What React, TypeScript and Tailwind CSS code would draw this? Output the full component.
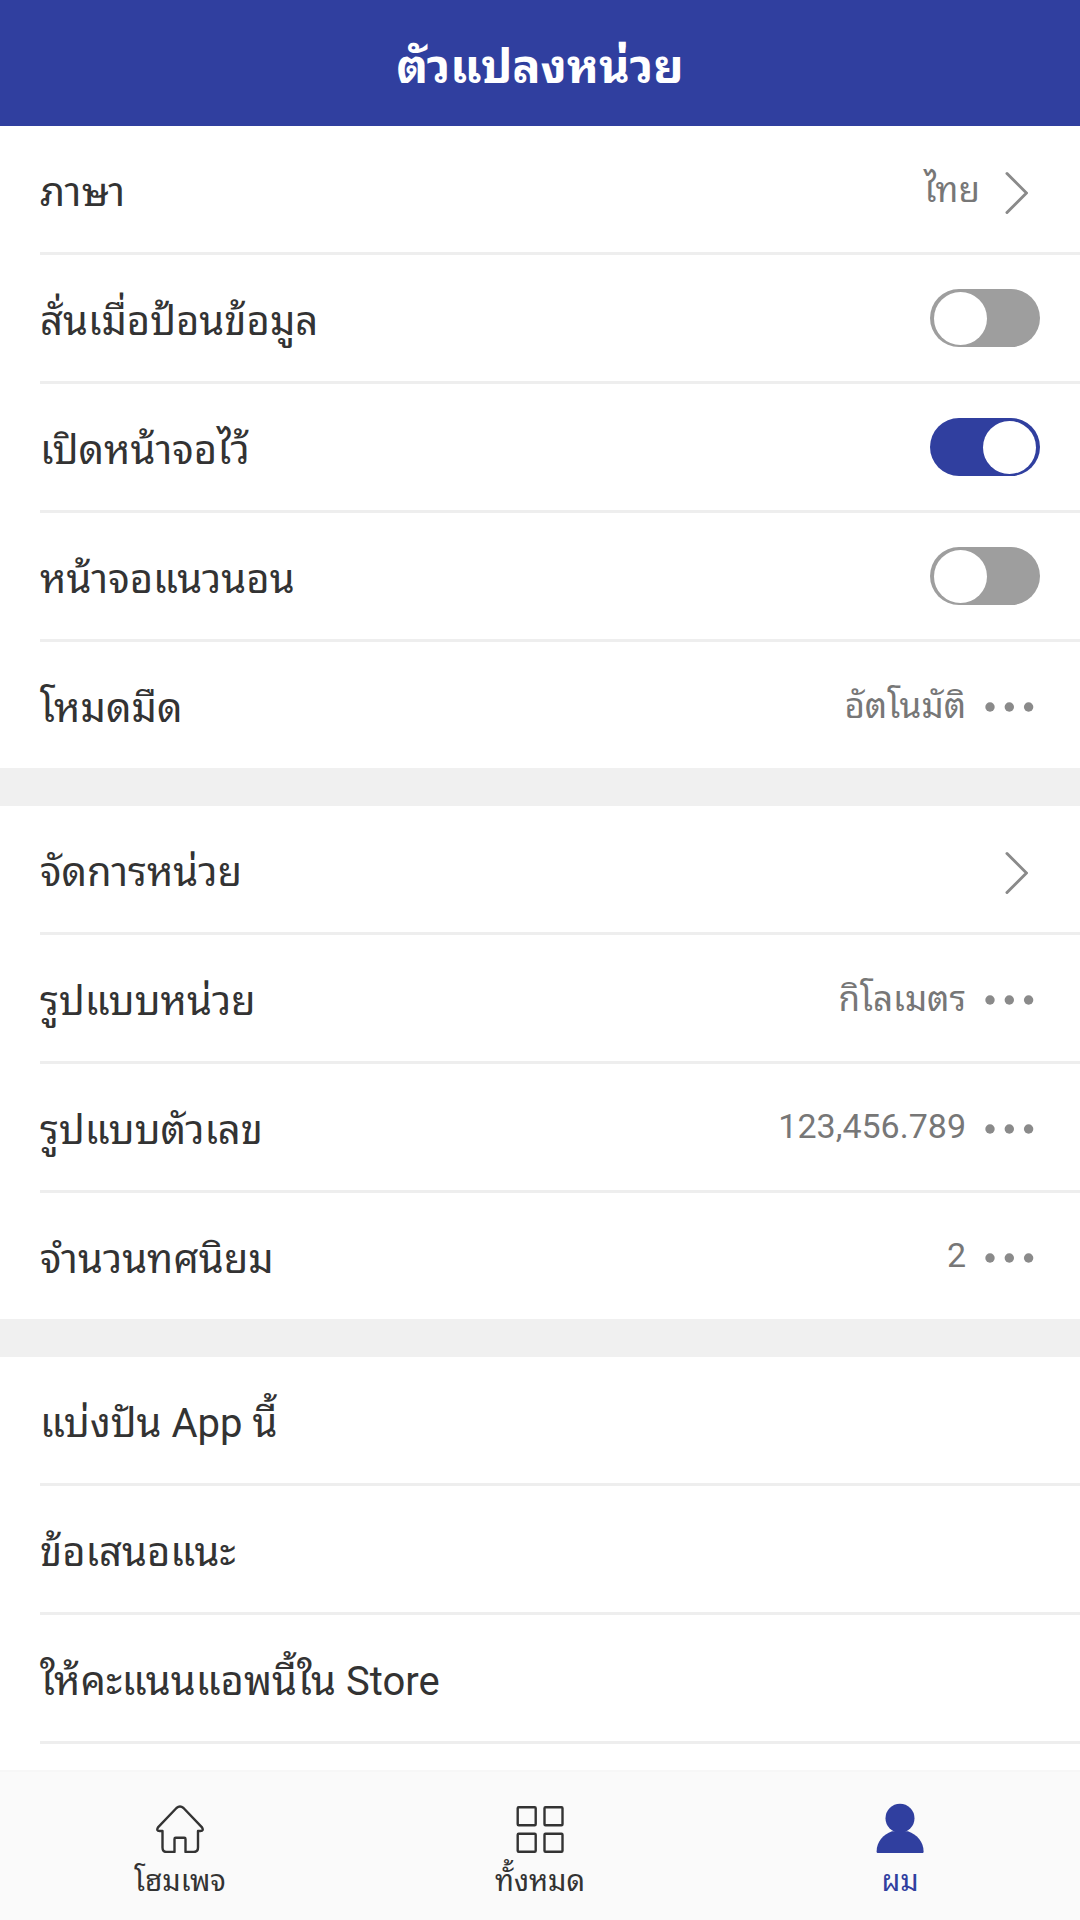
import { useState } from "react";

type RowProps = {
  label: string;
  value?: string;
  numeric?: boolean;
  kind?: "link" | "menu";
};

function Chevron() {
  return (
    <svg className="mt-1 mr-3 ml-6 h-11 w-6" viewBox="0 0 24 44" fill="none" stroke="#8a8a8a" strokeWidth="3" strokeLinecap="round">
      <path d="M3 2.500 22.500 22 3 41.500" />
    </svg>
  );
}

function Dots() {
  return (
    <svg className="mr-1 ml-[18px] h-3 w-13" viewBox="0 0 52 12" fill="#8a8a8a">
      <circle cx="6" cy="6" r="4.7" />
      <circle cx="25.300" cy="6" r="4.7" />
      <circle cx="44.600" cy="6" r="4.7" />
    </svg>
  );
}

function HomeIcon() {
  return (
    <svg className="size-12" viewBox="0 0 48 48" fill="none" stroke="currentColor" strokeWidth="2.4" strokeLinejoin="round">
      <path d="M20.500 3Q24 0 27.500 3L46 22.400Q48 26 44.500 26H42V42.500Q42 47 37.500 47H29.500V34Q29.500 32.800 28.300 32.800H19.700Q18.500 32.800 18.500 34V47H10.500Q6.500 47 6.500 42.500V26H3.500Q0 26 2 22.400Z" />
    </svg>
  );
}

function GridIcon() {
  return (
    <svg className="size-12" viewBox="0 0 48 48" fill="none" stroke="currentColor" strokeWidth="2.4">
      <rect x="1.7" y="2.2" width="18" height="18" rx="1" />
      <rect x="28.5" y="2.2" width="18" height="18" rx="1" />
      <rect x="1.7" y="28.8" width="18" height="18" rx="1" />
      <rect x="28.5" y="28.8" width="18" height="18" rx="1" />
    </svg>
  );
}

function PersonIcon() {
  return (
    <svg className="size-12 overflow-visible" viewBox="0 0 48 48" fill="currentColor">
      <circle cx="24" cy="13.300" r="14.500" />
      <path d="M16 26.200H32C41 29.500 47.600 37 47.600 46.500Q47.600 48 46.600 48H1.600Q.6 48 .6 46.500C.6 37 7 29.500 16 26.200Z" />
    </svg>
  );
}

function Row({ label, value, numeric = false, kind }: RowProps) {
  return (
    <li>
      <button type="button" className="flex h-[126px] w-full items-center pt-1 pr-10 text-left">
        <span className="flex-1 pt-1">{label}</span>
        {value && (
          <span className={numeric ? "pb-1.5 text-[34px] text-[#777777]" : "text-[35px] text-[#777777]"}>
            {value}
          </span>
        )}
        {kind === "link" && <Chevron />}
        {kind === "menu" && <Dots />}
      </button>
    </li>
  );
}

function ToggleRow({ label, initial = false }: { label: string; initial?: boolean }) {
  const [on, setOn] = useState(initial);

  return (
    <li>
      <label className="flex h-[126px] items-center justify-between pr-10">
        <span className="pt-2">{label}</span>
        <input
          type="checkbox"
          role="switch"
          checked={on}
          onChange={() => setOn(!on)}
          className="flex h-[58px] w-[110px] appearance-none items-center rounded-full bg-[#9e9e9e] px-1 before:size-[53px] before:rounded-full before:bg-white checked:justify-end checked:bg-[#303f9f]"
        />
      </label>
    </li>
  );
}

export default function App() {
  return (
    <div className="flex h-screen flex-col bg-white font-['Roboto','Noto_Sans_Thai_Looped',sans-serif] text-[40px] text-[#333333]">
      <header className="flex h-[126px] shrink-0 items-center justify-center bg-[#303f9f] pt-2 text-white">
        <h1 className="text-[47px] font-bold">ตัวแปลงหน่วย</h1>
      </header>
      <main className="min-h-0 flex-1 overflow-y-auto">
        <ul className="divide-y-3 divide-[#eeeeee] pl-10">
          <Row label="ภาษา" value="ไทย" kind="link" />
          <ToggleRow label="สั่นเมื่อป้อนข้อมูล" />
          <ToggleRow label="เปิดหน้าจอไว้" initial />
          <ToggleRow label="หน้าจอแนวนอน" />
          <Row label="โหมดมืด" value="อัตโนมัติ" kind="menu" />
        </ul>
        <div className="h-[38px] bg-[#f0f0f0]" />
        <ul className="divide-y-3 divide-[#eeeeee] pl-10">
          <Row label="จัดการหน่วย" kind="link" />
          <Row label="รูปแบบหน่วย" value="กิโลเมตร" kind="menu" />
          <Row label="รูปแบบตัวเลข" value="123,456.789" numeric kind="menu" />
          <Row label="จำนวนทศนิยม" value="2" numeric kind="menu" />
        </ul>
        <div className="h-[38px] bg-[#f0f0f0]" />
        <ul className="divide-y-3 divide-[#eeeeee] pl-10">
          <Row label="แบ่งปัน App นี้" />
          <Row label="ข้อเสนอแนะ" />
          <Row label="ให้คะแนนแอพนี้ใน Store" />
          <li />
        </ul>
      </main>
      <nav className="grid h-[150px] shrink-0 grid-cols-3 border-t-2 border-[#f7f7f7] bg-[#fafafa] text-[29px] leading-10">
        <a href="#home" className="flex flex-col items-center gap-2 pt-[33px]">
          <HomeIcon />
          โฮมเพจ
        </a>
        <a href="#all" className="flex flex-col items-center gap-2 pt-[33px]">
          <GridIcon />
          ทั้งหมด
        </a>
        <a href="#me" className="flex flex-col items-center gap-2 pt-[33px] text-[#303f9f]">
          <PersonIcon />
          ผม
        </a>
      </nav>
    </div>
  );
}
